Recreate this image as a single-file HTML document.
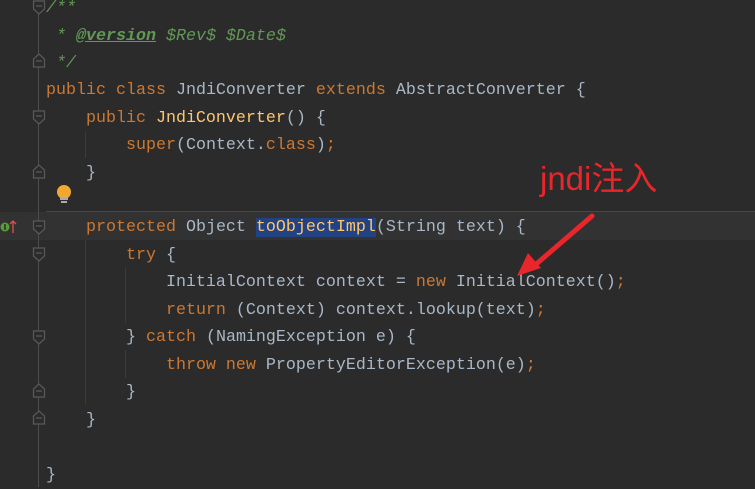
<!DOCTYPE html>
<html><head><meta charset="utf-8"><style>
body{margin:0;width:755px;height:487px;background:#2b2b2b;overflow:hidden;position:relative;font-family:"Liberation Mono",monospace;font-size:16.67px;color:#a9b7c6}
.l{position:absolute;left:46px;height:27.5px;line-height:27.5px;white-space:pre}
.k{color:#cc7832}.m{color:#ffc66d}.c{color:#629755;font-style:italic}.cu{color:#629755;font-style:italic;font-weight:bold;text-decoration:underline}
.sel{background:#214283;color:#ffc66d}
.g{position:absolute;width:1px;background:#3b3b3b}
</style></head><body>
<div style="position:absolute;left:0;top:212px;width:755px;height:28px;background:#323232"></div>
<div style="position:absolute;left:46px;top:211px;width:709px;height:1px;background:#474747"></div>
<div style="position:absolute;left:38px;top:0;width:1px;height:487px;background:#4d4d4d"></div>
<div class="g" style="left:85px;top:131px;height:27px"></div>
<div class="g" style="left:85px;top:240px;height:165px"></div>
<div class="g" style="left:125px;top:268px;height:55px"></div>
<div class="g" style="left:125px;top:350px;height:28px"></div>
<svg width="80" height="487" style="position:absolute;left:0;top:0">
<g fill="#2b2b2b" stroke="#5a5a5a" stroke-width="1.2">
<path d="M33.5 1h11v8l-5.5 5-5.5-5z"/><path d="M33.5 67h11v-8l-5.5-5-5.5 5z"/>
<path d="M33.5 111h11v8l-5.5 5-5.5-5z"/><path d="M33.5 178h11v-8l-5.5-5-5.5 5z"/>
<path d="M33.5 221h11v8l-5.5 5-5.5-5z"/><path d="M33.5 248h11v8l-5.5 5-5.5-5z"/>
<path d="M33.5 331h11v8l-5.5 5-5.5-5z"/><path d="M33.5 397h11v-8l-5.5-5-5.5 5z"/>
<path d="M33.5 424h11v-8l-5.5-5-5.5 5z"/>
</g>
<g stroke="#5a5a5a" stroke-width="1.2"><path d="M36 6h6M36 61h6M36 116h6M36 172h6M36 226h6M36 253h6M36 336h6M36 391h6M36 418h6"/></g>
<circle cx="5" cy="227" r="4.5" fill="#5a9a3a"/><path d="M5 224v6" stroke="#2b2b2b" stroke-width="1.5"/>
<path d="M13 233v-12M10 224l3-3 3 3" stroke="#e05050" stroke-width="1.3" fill="none"/>
<circle cx="64" cy="192" r="7" fill="#f0a830"/><rect x="60" y="198" width="8" height="2" fill="#aaa"/><rect x="61" y="201" width="6" height="2" fill="#aaa"/>
</svg>
<div class="l c" style="top:-5px">/**</div>
<div class="l c" style="top:22.5px"> * <span class="cu">@version</span> $Rev$ $Date$</div>
<div class="l c" style="top:50px"> */</div>
<div class="l" style="top:77px"><span class="k">public class </span>JndiConverter <span class="k">extends </span>AbstractConverter {</div>
<div class="l" style="top:104.5px">    <span class="k">public </span><span class="m">JndiConverter</span>() {</div>
<div class="l" style="top:132px">        <span class="k">super</span>(Context.<span class="k">class</span>)<span class="k">;</span></div>
<div class="l" style="top:159.5px">    }</div>
<div class="l" style="top:214px">    <span class="k">protected </span>Object <span class="sel">toObjectImpl</span>(String text) {</div>
<div class="l" style="top:241.5px">        <span class="k">try </span>{</div>
<div class="l" style="top:269px">            InitialContext context = <span class="k">new </span>InitialContext()<span class="k">;</span></div>
<div class="l" style="top:296.5px">            <span class="k">return </span>(Context) context.lookup(text)<span class="k">;</span></div>
<div class="l" style="top:324px">        } <span class="k">catch </span>(NamingException e) {</div>
<div class="l" style="top:351.5px">            <span class="k">throw new </span>PropertyEditorException(e)<span class="k">;</span></div>
<div class="l" style="top:379px">        }</div>
<div class="l" style="top:406.5px">    }</div>
<div class="l" style="top:461.5px">}</div>
<div style="position:absolute;left:540px;top:159px;font-family:'Liberation Sans','Noto Sans CJK SC',sans-serif;font-size:33px;color:#e8262b;line-height:40px">jndi注入</div>
<svg width="755" height="487" style="position:absolute;left:0;top:0">
<path d="M592 216L534 266" stroke="#e8262b" stroke-width="5" stroke-linecap="round"/>
<path d="M517 276L528 253L541 268z" fill="#e8262b"/>
</svg>
</body></html>
